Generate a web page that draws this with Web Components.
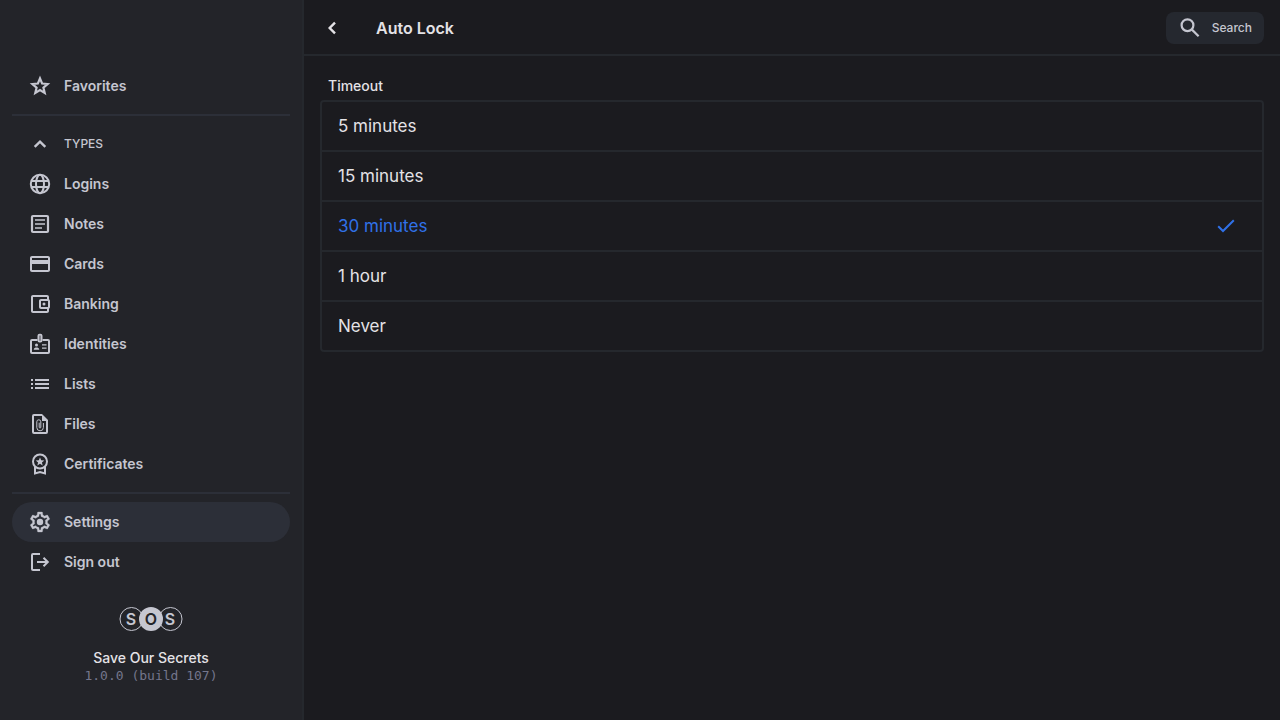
<!DOCTYPE html>
<html lang="en">
<head>
<meta charset="utf-8">
<meta name="viewport" content="width=device-width, initial-scale=1">
<title>Save Our Secrets - Auto Lock</title>
<style>
html, body {
    margin: 0;
    background: #1b1b1f;
}
body {
    --line: #25282d;
    --panel: #232429;
    --muted: #c5c6d0;
    --text: #e4e2e6;
    --accent: #3071e8;
    color: var(--text);
    font-family: Inter, "Liberation Sans", sans-serif;
    font-size: 14px;
    line-height: 20px;
}
</style>
</head>
<body>
<sos-app>
    <sos-sidebar slot="sidebar">
        <nav-item icon="star" href="#favorites">Favorites</nav-item>
        <nav-divider></nav-divider>
        <nav-group label="TYPES">
            <nav-item icon="globe" href="#logins">Logins</nav-item>
            <nav-item icon="note" href="#notes">Notes</nav-item>
            <nav-item icon="card" href="#cards">Cards</nav-item>
            <nav-item icon="wallet" href="#banking">Banking</nav-item>
            <nav-item icon="badge" href="#identities">Identities</nav-item>
            <nav-item icon="list" href="#lists">Lists</nav-item>
            <nav-item icon="file" href="#files">Files</nav-item>
            <nav-item icon="medal" href="#certificates">Certificates</nav-item>
        </nav-group>
        <nav-divider></nav-divider>
        <nav-item icon="gear" href="#settings" active>Settings</nav-item>
        <nav-item icon="exit" href="#signout">Sign out</nav-item>
        <app-about slot="footer" version="1.0.0 (build 107)">Save Our Secrets</app-about>
    </sos-sidebar>
    <page-header>Auto Lock</page-header>
    <option-list label="Timeout" options="5 minutes,15 minutes,30 minutes,1 hour,Never" value="30 minutes"></option-list>
</sos-app>

<script>
// all icons are on a 24x24 grid
const icons = {
    star: `<path fill="none" stroke="currentColor" stroke-width="2.2" d="M12 4.4l2.1 5.1 5.5.5-4.2 3.6 1.3 5.4-4.7-2.9L7.3 19l1.3-5.4L4.4 10l5.5-.5z"/>`,
    up: `<path fill="none" stroke="currentColor" stroke-width="2.4" d="M6.700 14.900L12 9.600l5.300 5.300"/>`,
    globe: `<g fill="none" stroke="currentColor" stroke-width="2"><circle cx="12" cy="12" r="9.200"/><ellipse cx="12" cy="12" rx="4" ry="9.200"/><path d="M3.300 9h17.400M3.300 15h17.400"/></g>`,
    note: `<rect x="4" y="4" width="16" height="16" rx="1" fill="none" stroke="currentColor" stroke-width="2.200"/><path fill="none" stroke="currentColor" stroke-width="1.400" d="M7 8h10M7 12h10M7 16h7"/>`,
    card: `<path d="M20 4H4c-1.11 0-1.99.89-1.99 2L2 18c0 1.11.89 2 2 2h16c1.11 0 2-.89 2-2V6c0-1.11-.89-2-2-2zm0 14H4v-6h16v6zm0-10H4V6h16v2z"/>`,
    wallet: `<path d="M21 7.28V5c0-1.1-.9-2-2-2H5c-1.11 0-2 .9-2 2v14c0 1.1.89 2 2 2h14c1.1 0 2-.9 2-2v-2.28c.59-.35 1-.98 1-1.72V9c0-.74-.41-1.37-1-1.72zM20 9v6h-7V9h7zM5 19V5h14v2h-6c-1.1 0-2 .9-2 2v6c0 1.1.9 2 2 2h6v2H5z"/><circle cx="16" cy="12" r="1.5"/>`,
    badge: `<path fill="none" stroke="currentColor" stroke-width="2" d="M9.500 8H4a1 1 0 0 0-1 1v11a1 1 0 0 0 1 1h16a1 1 0 0 0 1-1V9a1 1 0 0 0-1-1h-5.500"/><rect x="10.400" y="2.600" width="3.200" height="7" rx="1.200" fill="currentColor" fill-opacity=".45" stroke="currentColor" stroke-width="1.800"/><circle cx="8.500" cy="13" r="1.500"/><path d="M5.800 17.800v-.6c0-1.100 1.600-1.700 2.700-1.700s2.700.6 2.700 1.700v.6zM14 12.300h4.500v1.300H14zM14 15.500h4.500v1.300H14z"/>`,
    list: `<path d="M3 7h2v2H3zM3 11h2v2H3zM3 15h2v2H3zM7 7h14v2H7zM7 11h14v2H7zM7 15h14v2H7z"/>`,
    file: `<path fill="none" stroke="currentColor" stroke-width="2" d="M14 3H6a1 1 0 0 0-1 1v16a1 1 0 0 0 1 1h12a1 1 0 0 0 1-1V8"/><path d="M14 2l6 6v1h-6z"/><path fill="none" stroke="currentColor" stroke-width="1" d="M15.400 11v4.500a3.300 3.300 0 0 1-6.600 0V9.800a2 2 0 0 1 4 0v5.400a.8.8 0 0 1-1.600 0v-4.500"/>`,
    medal: `<circle cx="12" cy="9.500" r="7" fill="none" stroke="currentColor" stroke-width="2"/><path d="M12 5.400l1.200 2.900 3.100.2-2.400 2 .8 3-2.700-1.700-2.700 1.700.8-3-2.400-2 3.100-.2z"/><path fill="none" stroke="currentColor" stroke-width="2" d="M7 14.500v7l5-1.500 5 1.500v-7"/>`,
    gear: `<path stroke="currentColor" stroke-width=".3" d="M19.430 12.980c.04-.32.07-.64.07-.98 0-.34-.03-.66-.07-.98l2.110-1.650c.19-.15.24-.42.12-.64l-2-3.460c-.09-.16-.26-.25-.44-.25-.06 0-.12.01-.17.03l-2.490 1c-.52-.4-1.080-.73-1.690-.98l-.38-2.650C14.460 2.180 14.250 2 14 2h-4c-.25 0-.46.18-.49.42l-.38 2.650c-.61.25-1.170.59-1.690.98l-2.490-1c-.06-.02-.12-.03-.18-.03-.17 0-.34.09-.43.25l-2 3.460c-.13.22-.07.49.12.64l2.110 1.650c-.04.32-.07.65-.07.98 0 .33.03.66.07.98l-2.110 1.650c-.19.15-.24.42-.12.64l2 3.460c.09.16.26.25.44.25.06 0 .12-.01.17-.03l2.490-1c.52.4 1.080.73 1.690.98l.38 2.650c.03.24.24.42.49.42h4c.25 0 .46-.18.49-.42l.38-2.650c.61-.25 1.170-.59 1.690-.98l2.490 1c.06.02.12.03.18.03.17 0 .34-.09.43-.25l2-3.460c.12-.22.07-.49-.12-.64l-2.110-1.650zm-1.980-1.710c.04.31.05.52.05.73 0 .21-.02.43-.05.73l-.14 1.130.89.7 1.080.84-.7 1.210-1.270-.51-1.040-.42-.9.68c-.43.32-.84.56-1.250.73l-1.060.43-.16 1.130-.2 1.350h-1.400l-.19-1.350-.16-1.130-1.060-.43c-.43-.18-.83-.41-1.230-.71l-.91-.7-1.060.43-1.270.51-.7-1.210 1.080-.84.89-.7-.14-1.130c-.03-.31-.05-.54-.05-.74s.02-.43.05-.73l.14-1.130-.89-.7-1.080-.84.7-1.210 1.270.51 1.040.42.9-.68c.43-.32.84-.56 1.250-.73l1.060-.43.16-1.130.2-1.350h1.390l.19 1.350.16 1.130 1.060.43c.43.18.83.41 1.230.71l.91.7 1.060-.43 1.270-.51.7 1.210-1.070.85-.89.7.14 1.130z"/><circle cx="12" cy="12" r="3.200"/>`,
    exit: `<path fill="none" stroke="currentColor" stroke-width="2" d="M12 4H5a1 1 0 0 0-1 1v14a1 1 0 0 0 1 1h7M9 12h11M15.500 7.700l4.300 4.300-4.300 4.300"/>`,
    search: `<g fill="none" stroke="currentColor" stroke-width="2.200"><circle cx="9.500" cy="9.200" r="5.900"/><path d="M13.700 13.400l6.900 6.900"/></g>`,
    back: `<path fill="none" stroke="currentColor" stroke-width="2.400" d="M15 6.700L9.700 12l5.300 5.300"/>`,
    check: `<path fill="none" stroke="currentColor" stroke-width="2" d="M4.200 12.300l4.800 4.700L19.800 6.300"/>`
};

const svg = (name) => `<svg viewBox="0 0 24 24" fill="currentColor" aria-hidden="true">${icons[name]}</svg>`;

const base = `
:host, * { box-sizing: border-box; }
:host { display: block; }
svg { display: block; flex: none; width: 24px; height: 24px; }
button { border: 0; background: none; font: inherit; color: inherit; cursor: pointer; }
`;

class SosApp extends HTMLElement {
    connectedCallback() {
        this.attachShadow({ mode: "open" }).innerHTML = `
        <style>${base}
        :host { display: flex; min-height: 100vh; }
        main { flex: 1; min-width: 0; }
        </style>
        <slot name="sidebar"></slot>
        <main><slot></slot></main>`;
    }
}

class SosSidebar extends HTMLElement {
    connectedCallback() {
        this.attachShadow({ mode: "open" }).innerHTML = `
        <style>${base}
        :host {
            flex: none;
            width: 304px;
            padding: 66px 12px 24px;
            background: var(--panel);
            border-right: 2px solid var(--line);
            color: var(--muted);
        }
        </style>
        <nav><slot></slot></nav>
        <slot name="footer"></slot>`;
    }
}

class NavItem extends HTMLElement {
    connectedCallback() {
        const active = this.hasAttribute("active");
        this.attachShadow({ mode: "open" }).innerHTML = `
        <style>${base}
        a {
            display: flex;
            align-items: center;
            gap: 12px;
            height: 40px;
            padding: 0 16px;
            border-radius: 20px;
            color: inherit;
            font-weight: 600;
            text-decoration: none;
        }
        a:hover, :host([active]) a { background: #2c2f38; }
        </style>
        <a href="${this.getAttribute("href")}" ${active ? 'aria-current="page"' : ""}>${svg(this.getAttribute("icon"))}<span><slot></slot></span></a>`;
    }
}

class NavDivider extends HTMLElement {
    connectedCallback() {
        this.attachShadow({ mode: "open" }).innerHTML = `
        <style>${base}
        hr { height: 2px; margin: 8px 0; border: 0; background: #2c2f38; }
        </style>
        <hr>`;
    }
}

class NavGroup extends HTMLElement {
    connectedCallback() {
        this.attachShadow({ mode: "open" }).innerHTML = `
        <style>${base}
        button {
            display: flex;
            align-items: center;
            gap: 12px;
            width: 100%;
            height: 40px;
            padding: 0 16px;
            font-size: 12px;
            font-weight: 500;
        }
        .closed svg { transform: rotate(180deg); }
        </style>
        <button type="button" aria-expanded="true">${svg("up")}<span>${this.getAttribute("label")}</span></button>
        <div><slot></slot></div>`;

        const button = this.shadowRoot.querySelector("button");
        const items = this.shadowRoot.querySelector("div");
        button.onclick = () => {
            items.hidden = !items.hidden;
            button.classList.toggle("closed", items.hidden);
            button.setAttribute("aria-expanded", !items.hidden);
        };
    }
}

class AppAbout extends HTMLElement {
    connectedCallback() {
        this.attachShadow({ mode: "open" }).innerHTML = `
        <style>${base}
        :host { padding-top: 24px; text-align: center; color: var(--text); font-weight: 500; }
        .logo { width: 64px; height: 26px; margin: 0 auto 16px; color: var(--muted); }
        .logo text { font-size: 16px; font-weight: 600; text-anchor: middle; }
        .version {
            color: #74768c;
            font: 13px/16px "DejaVu Sans Mono", monospace;
        }
        </style>
        <svg class="logo" viewBox="0 0 64 26" fill="currentColor">
            <circle cx="12.500" cy="13" r="11.500" fill="none" stroke="currentColor"/>
            <circle cx="51.500" cy="13" r="11.500" fill="none" stroke="currentColor"/>
            <circle cx="32" cy="13" r="12"/>
            <text x="12" y="19">S</text>
            <text x="32" y="19" fill="#232429">O</text>
            <text x="51" y="19">S</text>
        </svg>
        <div><slot></slot></div>
        <div class="version">${this.getAttribute("version")}</div>`;
    }
}

class PageHeader extends HTMLElement {
    connectedCallback() {
        this.attachShadow({ mode: "open" }).innerHTML = `
        <style>${base}
        header {
            display: flex;
            align-items: center;
            height: 56px;
            padding: 2px 16px 0;
            border-bottom: 2px solid var(--line);
        }
        .back { padding: 0; }
        h1 { flex: 1; margin: 0 0 0 32px; font-size: 16px; font-weight: 600; }
        .search {
            display: flex;
            align-items: center;
            gap: 10px;
            height: 32px;
            padding: 0 12px;
            border-radius: 8px;
            background: #25282f;
            color: var(--muted);
            font-size: 12px;
            font-weight: 500;
        }
        </style>
        <header>
            <button class="back" type="button" aria-label="Back">${svg("back")}</button>
            <h1><slot></slot></h1>
            <button class="search" type="button">${svg("search")}<span>Search</span></button>
        </header>`;
    }
}

class OptionList extends HTMLElement {
    connectedCallback() {
        const value = this.getAttribute("value");
        const rows = this.getAttribute("options").split(",").map((option, i) => `
            <label for="option${i}">
                <input type="radio" name="option" id="option${i}" value="${option}" ${option === value ? "checked" : ""}>
                <span>${option}</span>
                ${svg("check")}
            </label>`).join("");

        this.attachShadow({ mode: "open" }).innerHTML = `
        <style>${base}
        :host { padding: 20px 16px; }
        fieldset { min-width: 0; margin: 0; padding: 0; border: 0; }
        legend { padding: 0 8px 4px; font-weight: 500; }
        .rows { border: 2px solid var(--line); border-radius: 4px; }
        label {
            display: flex;
            align-items: center;
            justify-content: space-between;
            height: 48px;
            padding: 0 24px 0 16px;
            font-size: 17px;
            cursor: pointer;
        }
        label + label { height: 50px; border-top: 2px solid var(--line); }
        input { position: absolute; opacity: 0; margin: 0; }
        svg { visibility: hidden; }
        input:checked ~ span, input:checked ~ svg { color: var(--accent); visibility: visible; }
        </style>
        <fieldset>
            <legend>${this.getAttribute("label")}</legend>
            <div class="rows">${rows}</div>
        </fieldset>`;
    }
}

customElements.define("sos-app", SosApp);
customElements.define("sos-sidebar", SosSidebar);
customElements.define("nav-item", NavItem);
customElements.define("nav-divider", NavDivider);
customElements.define("nav-group", NavGroup);
customElements.define("app-about", AppAbout);
customElements.define("page-header", PageHeader);
customElements.define("option-list", OptionList);
</script>
</body>
</html>
